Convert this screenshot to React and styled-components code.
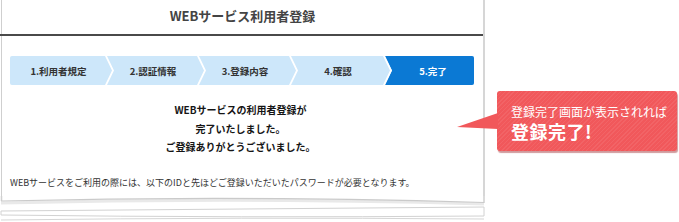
import styled, { createGlobalStyle } from "styled-components";

const GlobalStyle = createGlobalStyle`
  html, body {
    margin: 0;
    padding: 0;
    background: #ffffff;
  }
  body {
    font-family: "Noto Sans CJK JP", "Noto Sans", sans-serif;
  }
`;

const Stage = styled.div`
  display: flex;
  align-items: flex-start;
  width: 679px;
  height: 222px;
  overflow: hidden;
  background: #fff;
`;

const Paper = styled.div`
  display: flex;
  flex-direction: column;
  width: 485px;
  flex-shrink: 0;
`;

const Sheet = styled.div`
  display: flex;
  flex-direction: column;
  height: 196px;
  margin-left: 1px;
  border-left: 1px solid #cfcfcf;
  border-right: 2px solid #d6d6d6;
  box-sizing: border-box;
`;

const Title = styled.h1`
  margin: 0;
  height: 34px;
  line-height: 32px;
  text-align: center;
  font-size: 13px;
  font-weight: 700;
  color: #444;
`;

const Rule = styled.div`
  height: 2px;
  margin-left: -2px;
  background: #4a4a4a;
`;

const Steps = styled.ol`
  display: grid;
  grid-template-columns: 97px 92px 92px 94px 1fr;
  height: 29px;
  margin: 20px 9px 0 8px;
  padding: 0;
  list-style: none;
  background: #cde7fa;
  border-radius: 2px;
  overflow: hidden;
`;

const Step = styled.li`
  position: relative;
  display: flex;
  align-items: center;
  justify-content: center;
  padding-left: ${(p) => (p.$active ? "7px" : "0")};
  font-size: 9.5px;
  font-weight: 700;
  color: ${(p) => (p.$active ? "#ffffff" : "#333")};
  background: ${(p) => (p.$active ? "#0b79d4" : "transparent")};
  clip-path: ${(p) =>
    p.$active ? "polygon(0 0, 100% 0, 100% 100%, 0 100%, 7px 50%)" : "none"};

  ${(p) =>
    !p.$active &&
    `
    &::after {
      content: "";
      position: absolute;
      top: 0;
      right: -7px;
      width: 9px;
      height: 100%;
      background: #ffffff;
      z-index: 1;
      clip-path: polygon(0 0, 2px 0, 9px 50%, 2px 100%, 0 100%, 7px 50%);
    }
  `}
`;

const Message = styled.p`
  margin: 16px 4px 0 0;
  text-align: center;
  font-size: 10px;
  line-height: 18.5px;
  font-weight: 700;
  color: #151515;
`;

const Note = styled.p`
  margin: 19px 0 0 8px;
  font-size: 9px;
  line-height: 14px;
  color: #333;
  white-space: nowrap;
`;

const Edge = styled.svg`
  display: block;
  width: 485px;
  height: 26px;
`;

const Aside = styled.div`
  margin: 91px 0 0 12px;
`;

const Callout = styled.div`
  position: relative;
  width: 180px;
  height: 60px;
  box-sizing: border-box;
  padding: 13px 0 0 14px;
  border-radius: 3px;
  color: #fff;
  background-color: #f1585b;
  background-image: repeating-linear-gradient(
    135deg,
    rgba(255, 255, 255, 0.07) 0 1px,
    transparent 1px 3px
  );
  box-shadow: 1px 2px 1px rgba(150, 30, 35, 0.45);

  &::before {
    content: "";
    position: absolute;
    left: -40px;
    top: 22px;
    width: 41px;
    height: 16px;
    background: #f1585b;
    clip-path: polygon(100% 0, 0 14px, 100% 100%);
  }
`;

const CalloutLead = styled.div`
  font-size: 12px;
  line-height: 16px;
  white-space: nowrap;
`;

const CalloutMain = styled.div`
  font-size: 18px;
  line-height: 22px;
  font-weight: 700;
  letter-spacing: 0.5px;
`;

const steps = ["1.利用者規定", "2.認証情報", "3.登録内容", "4.確認", "5.完了"];

function PaperEdge() {
  return (
    <Edge viewBox="0 0 485 26">
      <path d="M1.5 0 V5 M484 0 V7" stroke="#d0d0d0" strokeWidth="1.5" fill="none" />
      <path d="M1 7 Q 240 1 484 8" stroke="#e9e9e9" strokeWidth="3" fill="none" />
      <path d="M1 5 Q 240 -1 484 6.5" stroke="#cacaca" strokeWidth="1.2" fill="none" />
      <path d="M1 15 L484 11 V20 Q 240 22 1 19 Z" fill="#fff" stroke="#d2d2d2" strokeWidth="1" />
      <path d="M1 24 Q 240 21 484 23" stroke="#d6d6d6" strokeWidth="1" fill="none" />
    </Edge>
  );
}

export default function App() {
  return (
    <Stage>
      <GlobalStyle />
      <Paper>
        <Sheet>
          <Title>WEBサービス利用者登録</Title>
          <Rule />
          <Steps>
            {steps.map((label, i) => (
              <Step key={label} $active={i === steps.length - 1}>
                {label}
              </Step>
            ))}
          </Steps>
          <Message>
            WEBサービスの利用者登録が
            <br />
            完了いたしました。
            <br />
            ご登録ありがとうございました。
          </Message>
          <Note>
            WEBサービスをご利用の際には、以下のIDと先ほどご登録いただいたパスワードが必要となります。
          </Note>
        </Sheet>
        <PaperEdge />
      </Paper>
      <Aside>
        <Callout>
          <CalloutLead>登録完了画面が表示されれば</CalloutLead>
          <CalloutMain>登録完了!</CalloutMain>
        </Callout>
      </Aside>
    </Stage>
  );
}
